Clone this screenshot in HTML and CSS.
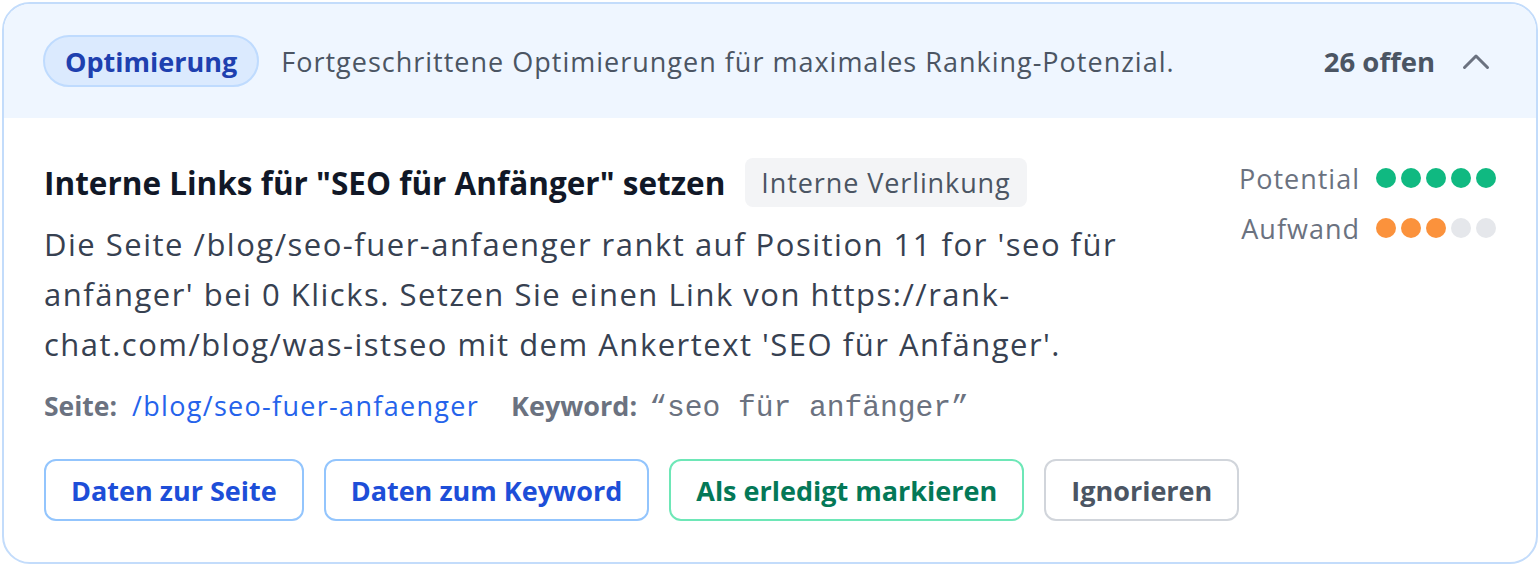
FILE: index.html
```html
<!DOCTYPE html>
<html lang="de">
<head>
<meta charset="utf-8">
<link rel="stylesheet" href="styles.css">
</head>
<body>
<section class="card">
  <header class="card-head">
    <span class="chip">Optimierung</span>
    <span class="head-desc">Fortgeschrittene Optimierungen für maximales Ranking-Potenzial.</span>
    <span class="head-count">26 offen</span>
    <svg class="chev" width="28" height="18" viewBox="0 0 28 18"><polyline points="2.5,15.5 14,4 25.5,15.5" fill="none" stroke="#6b7280" stroke-width="3" stroke-linecap="round" stroke-linejoin="round"/></svg>
  </header>
  <div class="card-body">
    <div class="main">
      <div class="title-row">
        <h3 class="title">Interne Links für "SEO für Anfänger" setzen</h3>
        <span class="tag">Interne Verlinkung</span>
      </div>
      <p class="desc">Die Seite /blog/seo-fuer-anfaenger rankt auf Position 11 for 'seo für anfänger' bei 0 Klicks. Setzen Sie einen Link von https://rank-chat.com/blog/was-istseo mit dem Ankertext 'SEO für Anfänger'.</p>
      <div class="meta">
        <span class="meta-label">Seite:</span>
        <a class="meta-link">/blog/seo-fuer-anfaenger</a>
        <span class="meta-label kw">Keyword:</span>
        <span class="meta-mono">“seo für anfänger”</span>
      </div>
      <div class="actions">
        <button class="btn btn-blue">Daten zur Seite</button>
        <button class="btn btn-blue">Daten zum Keyword</button>
        <button class="btn btn-green">Als erledigt markieren</button>
        <button class="btn btn-gray">Ignorieren</button>
      </div>
    </div>
    <div class="scores">
      <div class="score-row">
        <span class="score-label">Potential</span>
        <span class="dots"><i class="dot g"></i><i class="dot g"></i><i class="dot g"></i><i class="dot g"></i><i class="dot g"></i></span>
      </div>
      <div class="score-row">
        <span class="score-label">Aufwand</span>
        <span class="dots"><i class="dot o"></i><i class="dot o"></i><i class="dot o"></i><i class="dot e"></i><i class="dot e"></i></span>
      </div>
    </div>
  </div>
</section>
</body>
</html>
```

FILE: styles.css
```css
* { box-sizing: border-box; }
html, body { margin: 0; padding: 0; background: #ffffff; }
body {
  padding: 2px;
  font-family: "Open Sans", "Noto Sans", sans-serif;
  color: #374151;
}
.card {
  width: 1536px;
  height: 562px;
  border: 2px solid #c3dcfb;
  border-radius: 28px;
  overflow: hidden;
  background: #ffffff;
}
.card-head {
  display: flex;
  align-items: center;
  height: 114px;
  padding: 0 46px 0 39px;
  background: #eff6ff;
}
.chip {
  display: inline-flex;
  align-items: center;
  height: 52px;
  padding: 0 20px;
  border: 2px solid #bfdbfe;
  border-radius: 26px;
  background: #dbeafe;
  color: #1e40af;
  font-weight: 700;
  font-size: 27px;
}
.head-desc {
  margin-left: 22px;
  font-size: 27px;
  letter-spacing: 1px;
  color: #4b5563;
  flex: 1;
}
.head-count {
  font-size: 27.5px;
  font-weight: 700;
  color: #4b5563;
}
.chev { margin-left: 27px; }
.card-body {
  display: flex;
  align-items: flex-start;
  padding: 40px 40px 40px 40px;
}
.main { flex: 1; min-width: 0; }
.title-row {
  display: flex;
  align-items: center;
  gap: 20px;
  height: 49px;
}
.title {
  margin: 0;
  font-size: 31.5px;
  font-weight: 700;
  color: #111827;
}
.tag {
  display: inline-flex;
  align-items: center;
  height: 49px;
  padding: 0 16px;
  border-radius: 8px;
  background: #f3f4f6;
  color: #4b5563;
  font-size: 27px;
  letter-spacing: 0.9px;
}
.desc {
  margin: 12px 0 0 0;
  max-width: 1110px;
  font-size: 31px;
  letter-spacing: 1.5px;
  line-height: 50px;
  color: #374151;
}
.meta {
  display: flex;
  align-items: baseline;
  margin-top: 18px;
  height: 36px;
  font-size: 26.5px;
}
.meta-label { font-weight: 700; color: #6b7280; }
.meta-link { margin-left: 15px; color: #2563eb; font-size: 27px; letter-spacing: 1.3px; }
.kw { margin-left: 32px; font-size: 27px; }
.meta-mono {
  margin-left: 12px;
  font-family: "Liberation Mono", "DejaVu Sans Mono", monospace;
  font-size: 29.6px;
  color: #6b7280;
}
.actions {
  display: flex;
  gap: 20px;
  margin-top: 36px;
}
.btn {
  flex-shrink: 0;
  white-space: nowrap;
  height: 62px;
  padding: 0 25px;
  border-radius: 12px;
  background: #ffffff;
  font-family: inherit;
  font-size: 27px;
  font-weight: 700;
  border: 2px solid #93c5fd;
}
.btn-blue { color: #1d4ed8; border-color: #93c5fd; }
.btn-green { color: #047857; border-color: #6ee7b7; }
.btn-gray { color: #4b5563; border-color: #d1d5db; }
.scores {
  display: flex;
  flex-direction: column;
  gap: 10px;
}
.score-row {
  display: flex;
  align-items: center;
  justify-content: flex-end;
  gap: 16px;
  height: 40px;
}
.score-label { font-size: 27px; letter-spacing: 1px; color: #6b7280; }
.dots { display: flex; gap: 5px; }
.dot { display: block; width: 20px; height: 20px; border-radius: 50%; }
.dot.g { background: #10b981; }
.dot.o { background: #fb923c; }
.dot.e { background: #e5e7eb; }
```
